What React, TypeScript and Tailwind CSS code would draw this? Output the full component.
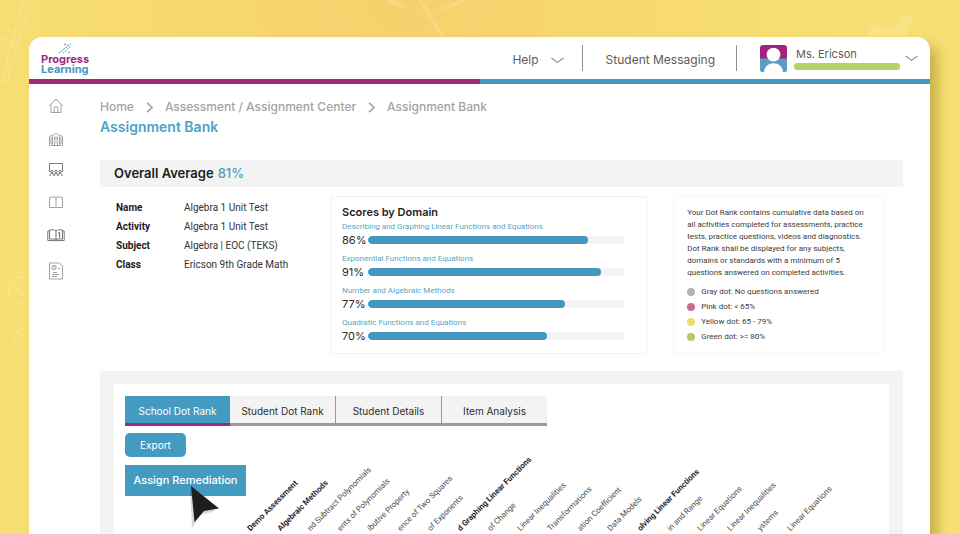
import type { ReactNode } from "react";

const domains = [
  { name: "Describing and Graphing Linear Functions and Equations", score: 86 },
  { name: "Exponential Functions and Equations", score: 91 },
  { name: "Number and Algebraic Methods", score: 77 },
  { name: "Quadratic Functions and Equations", score: 70 },
];

const details = [
  ["Name", "Algebra 1 Unit Test"],
  ["Activity", "Algebra 1 Unit Test"],
  ["Subject", "Algebra | EOC (TEKS)"],
  ["Class", "Ericson 9th Grade Math"],
];

const legend = [
  { color: "bg-[#b3b3b3]", text: "Gray dot: No questions answered" },
  { color: "bg-[#cf6b8e]", text: "Pink dot: < 65%" },
  { color: "bg-[#ecdc6c]", text: "Yellow dot: 65 - 79%" },
  { color: "bg-[#b5cb6c]", text: "Green dot: >= 80%" },
];

const columns = [
  { text: "Demo Assessment", strong: true },
  { text: "Algebraic Methods", strong: true },
  { text: "nd Subtract Polynomials" },
  { text: "ents of Polynomials" },
  { text: "ibutive Property" },
  { text: "ence of Two Squares" },
  { text: "of Exponents" },
  { text: "d Graphing Linear Functions", strong: true },
  { text: "of Change" },
  { text: "Linear Inequalities" },
  { text: "Transformations" },
  { text: "ation Coefficient" },
  { text: "Data Models" },
  { text: "olving Linear Functions", strong: true },
  { text: "in and Range" },
  { text: "Linear Equations" },
  { text: "Linear Inequalities" },
  { text: "ystems" },
  { text: "Linear Equations" },
];

const tabs = ["School Dot Rank", "Student Dot Rank", "Student Details", "Item Analysis"];

function ChevronDown() {
  return (
    <svg width="13" height="7" viewBox="0 0 13 7" fill="none" stroke="#8a8a8a" strokeWidth="1.1" aria-hidden="true">
      <path d="M.5 1 6.5 5.4 12.5 1" />
    </svg>
  );
}

function ChevronRight() {
  return (
    <svg width="7" height="11" viewBox="0 0 7 11" fill="none" stroke="#a3a3a3" strokeWidth="1.6" aria-hidden="true">
      <path d="M1 .8 6 5.500 1 10.200" />
    </svg>
  );
}

function Logo() {
  return (
    <a href="#home" aria-label="Progress Learning" className="flex flex-col text-[11px] leading-[10px] font-bold">
      <svg width="47" height="12" viewBox="0 0 47 12" fill="none" aria-hidden="true">
        <path d="M18 11 31 1M22 11 30 4" stroke="#55b3b0" strokeWidth="1" strokeDasharray="2 .7" />
        <path d="M17 11.4 25 5" stroke="#8fcfd0" strokeWidth=".8" strokeDasharray="1.4 .8" />
        <circle cx="24" cy="2.4" r=".8" fill="#c0559a" />
        <circle cx="28" cy="10.2" r=".8" fill="#c0559a" />
        <circle cx="26.6" cy="3.2" r=".6" fill="#4a9cc4" />
      </svg>
      <span className="text-[#9c2a7f]">Progress</span>
      <span className="text-[#3f98bf]">Learning</span>
    </a>
  );
}

function Avatar() {
  return (
    <svg width="27" height="27" viewBox="0 0 27 27" aria-hidden="true">
      <path d="M0 14V3a3 3 0 0 1 3-3h21a3 3 0 0 1 3 3v11z" fill="#a3217c" />
      <path d="M0 13.5h27V25a2 2 0 0 1-2 2H2a2 2 0 0 1-2-2z" fill="#5b9cc4" />
      <circle cx="13.5" cy="9.6" r="6.9" fill="#fff" />
      <path d="M4 27c.6-5.400 4.600-8.700 9.500-8.700S22.400 21.600 23 27z" fill="#fff" />
    </svg>
  );
}

function NavIcon({ label, children, dark }: { label: string; children: ReactNode; dark?: boolean }) {
  return (
    <a href="#nav" aria-label={label} className={dark ? "text-[#77777b]" : "text-[#a2a2a4]"}>
      <svg width="18" height="18" viewBox="0 0 18 18" fill="none" stroke="currentColor" strokeWidth="1" strokeLinejoin="round" aria-hidden="true">
        {children}
      </svg>
    </a>
  );
}

function Sidebar() {
  return (
    <nav aria-label="Main" className="flex w-[71px] shrink-0 flex-col gap-[15px] pt-[13px] pl-[18px]">
      <NavIcon label="Home">
        <path d="M2 9 9 2l7 7M4 7.500V15.500h10V7.500M7 15.500v-4a2 2 0 0 1 4 0v4" />
      </NavIcon>
      <NavIcon label="School">
        <path d="M5.500 15.500V6L9 3l3.500 3v9.500M5.500 5l-3 1.500v9h13v-9l-3-1.500M7.500 15.500V12h3v3.500M4 7.500v6.500M14 7.500v6.500M7.500 7v3.500M9 6v4.500M10.500 7v3.500" />
      </NavIcon>
      <NavIcon label="Classroom" dark>
        <path d="M4 8.500H2.500V.5h13v8H14" />
        <circle cx="5" cy="8.500" r="1.200" />
        <circle cx="9" cy="8.500" r="1.200" />
        <circle cx="13" cy="8.500" r="1.200" />
        <path d="M3 13v-1.500l2-1.500 2 1.500V13M7 13v-1.500L9 10l2 1.500V13M11 13v-1.500l2-1.500 2 1.500V13" />
      </NavIcon>
      <NavIcon label="Library">
        <path d="M2.500 1.500q4-1.400 6.500 0 2.500-1.400 6.500 0V11.500H10L9 12l-1-.5H2.500zM9 1.500V12" />
      </NavIcon>
      <NavIcon label="Assignments" dark>
        <path d="M2.500 2h-1.700v9.500h7.200l1 .6 1-.6h7.200V2h-1.700M2.500 10V1q4.500-1.300 6.500 1 2-2.300 6.500-1v9H10L9 11l-1-1zM9 2v9" />
        <path d="M11.400 4.200 12.500 3.500V8.500" strokeWidth="1.300" />
      </NavIcon>
      <NavIcon label="Reports">
        <path d="M2.500 1h10l3 3v13h-13zM6 10.500h4M5 12.500h7M5 14.500h5" />
        <circle cx="7" cy="5.500" r="2.200" />
        <path d="M7 3.500v2l1.600 1.300M11 6.500h2" />
      </NavIcon>
    </nav>
  );
}

function Header() {
  return (
    <header>
      <div className="flex h-[42px] items-center justify-between pr-3 pl-3 text-xs text-[#5c5c5e]">
        <Logo />
        <div className="flex items-center">
          <button type="button" className="flex items-center gap-3 pt-1">
            Help
            <ChevronDown />
          </button>
          <span className="mr-[23px] ml-[18px] h-[26px] w-px bg-[#8f8f91]" />
          <a href="#messages" className="pt-1">
            Student Messaging
          </a>
          <span className="mr-[23px] ml-[21px] h-[26px] w-px bg-[#8f8f91]" />
          <button type="button" className="flex items-center gap-[5px] text-left">
            <Avatar />
            <span className="ml-0.5 flex w-[106px] flex-col gap-0.5 text-[11px] leading-[14px]">
              <span className="pl-0.5">Ms. Ericson</span>
              <span className="h-[7px] rounded-[3px] bg-[#b0d564]" />
            </span>
            <ChevronDown />
          </button>
        </div>
      </div>
      <div className="flex h-[5px]">
        <div className="flex-1 bg-[#a3267d]" />
        <div className="flex-1 bg-[#4699be]" />
      </div>
    </header>
  );
}

function ScoresByDomain() {
  return (
    <section className="border border-[#f2f2f2] pt-2 pr-[22px] pb-2 pl-2.5">
      <h2 className="text-[11px] leading-[14px] font-semibold text-[#1f1f1f]">Scores by Domain</h2>
      <ul className="mt-0.5 flex flex-col gap-1.5">
        {domains.map((d) => (
          <li key={d.name}>
            <p className="font-['Roboto',sans-serif] text-[8px] leading-3 text-[#55a7c5]">{d.name}</p>
            <div className="flex h-3.5 items-center">
              <span className="w-[26px] text-[11px] text-[#2a2a2a]">{d.score}%</span>
              <div
                role="meter"
                aria-label={d.name}
                aria-valuenow={d.score}
                aria-valuemin={0}
                aria-valuemax={100}
                className="h-2 flex-1 overflow-hidden rounded-full bg-[#f4f4f4]"
              >
                <div className="h-full rounded-full bg-[#4496bf]" style={{ width: `${d.score}%` }} />
              </div>
            </div>
          </li>
        ))}
      </ul>
    </section>
  );
}

function DotRankInfo() {
  return (
    <section className="border border-[#f7f7f7] py-2.5 pr-3.5 pl-[13px] font-['Roboto',sans-serif] text-[8px] leading-3 text-[#3c3c3e]">
      <p>
        Your Dot Rank contains cumulative data based on all activities completed for assessments, practice tests,
        practice questions, videos and diagnostics. Dot Rank shall be displayed for any subjects, domains or standards
        with a minimum of 5 questions answered on completed activities.
      </p>
      <ul className="mt-[7px] flex flex-col gap-[3px]">
        {legend.map((l) => (
          <li key={l.text} className="flex items-center gap-1.5">
            <span className={`size-2 rounded-full ${l.color}`} />
            {l.text}
          </li>
        ))}
      </ul>
    </section>
  );
}

function DotRankPanel() {
  return (
    <section className="mt-[18px] flex-1 bg-[#f3f3f4] px-3.5 pt-[13px]">
      <div className="h-full bg-white px-[11px] pt-3">
        <div role="tablist" className="flex w-[422px] text-[10px]">
          {tabs.map((t, i) => (
            <button
              key={t}
              type="button"
              role="tab"
              aria-selected={i === 0}
              className={
                i === 0
                  ? "h-[30px] flex-1 border-b-3 border-[#9c2a85] bg-[#449bc1] pt-1 text-white"
                  : i === 1
                    ? "h-[30px] flex-1 border-b-3 border-[#999] bg-[#f3f3f4] pt-1 text-[#2e2e2e]"
                    : "h-[30px] flex-1 border-b-3 border-l border-[#999] bg-[#f3f3f4] pt-1 text-[#2e2e2e]"
              }
            >
              {t}
            </button>
          ))}
        </div>
        <div className="relative mt-[7px] flex flex-col items-start gap-2">
          <button type="button" className="h-6 w-[61px] rounded-[5px] bg-[#449bc1] text-[10px] text-white">
            Export
          </button>
          <button type="button" className="h-[31px] w-[121px] bg-[#449bc1] text-[11px] font-medium text-white">
            Assign Remediation
          </button>
          <svg className="absolute top-[52px] left-[64px]" width="34" height="44" viewBox="0 0 34 44" aria-hidden="true">
            <path d="M1 4 3 43 12 30 26 26z" fill="#000" opacity=".15" />
            <path d="M2 1 5.500 37 15 26 30 23.500z" fill="#1e1e1f" />
          </svg>
        </div>
        <table className="mt-7 ml-[124px] table-fixed border-collapse">
          <thead>
            <tr>
              {columns.map((c, i) => (
                <th
                  key={i}
                  scope="col"
                  className={
                    c.strong
                      ? "p-0 text-left font-['Roboto',sans-serif] text-[8px] leading-3 font-bold text-[#2a2a2a]"
                      : "p-0 text-left font-['Roboto',sans-serif] text-[8px] leading-3 font-normal text-[#4a4a4a]"
                  }
                >
                  <div className="w-[30px]">
                    <div className="w-max max-w-[30px] origin-left -rotate-45 whitespace-nowrap">{c.text}</div>
                  </div>
                </th>
              ))}
            </tr>
          </thead>
        </table>
      </div>
    </section>
  );
}

function Doodles() {
  return (
    <svg
      className="absolute inset-0 size-full"
      viewBox="0 0 960 534"
      preserveAspectRatio="none"
      fill="none"
      stroke="#fff"
      strokeOpacity=".14"
      strokeWidth="2"
      aria-hidden="true"
    >
      <path d="M22 4 2 82l4 2L28 8zM0 38l24 8M6 30l18 8M22 4l6-2 1 5" />
      <path d="M27 278c-14-4-22 8-16 18 4 7 12 8 17 6M14 288l10 8M28 328c-14 0-18 14-10 22l10 6" />
      <path d="m868 36 4-12 14 4 12-2 6-12 10 4-8 18z" fill="#fff" fillOpacity=".15" stroke="none" />
      <path d="M388 0l18 7M420 0l22 36M440 10l26-10" strokeWidth="4" />
    </svg>
  );
}

export default function App() {
  return (
    <div className="relative h-screen overflow-hidden bg-[#f7df73] bg-[radial-gradient(ellipse_at_42%_0%,#f6d16d_0%,#f7df73_55%)] pt-[37px] pr-[30px] pl-[29px] font-['Inter',sans-serif]">
      <Doodles />
      <div className="relative flex h-full flex-col overflow-hidden rounded-t-[13px] bg-white shadow-[8px_8px_12px_rgba(120,95,0,0.35)]">
        <Header />
        <div className="flex min-h-0 flex-1">
          <Sidebar />
          <main className="flex min-w-0 flex-1 flex-col pt-[15px] pr-[27px]">
            <nav aria-label="Breadcrumb" className="flex items-center gap-3 text-xs leading-4 font-medium text-[#a3a3a3]">
              <a href="#home">Home</a>
              <ChevronRight />
              <a href="#center">Assessment / Assignment Center</a>
              <ChevronRight />
              <a href="#bank">Assignment Bank</a>
            </nav>
            <h1 className="mt-1 text-sm leading-4 font-semibold text-[#4ba2c5]">Assignment Bank</h1>
            <div className="mt-[25px] flex h-[27px] shrink-0 items-center gap-1 bg-[#f3f3f4] px-3.5 text-[13px] font-semibold text-[#1c1c1c]">
              Overall Average <span className="font-medium text-[#4ba2c5]">81%</span>
            </div>
            <div className="mt-[9px] flex h-[157px] shrink-0 pr-[19px] pl-4">
              <dl className="flex w-[215px] shrink-0 flex-col pt-0.5 font-['Roboto',sans-serif] text-[10px] leading-[19px] text-[#333]">
                {details.map(([k, v]) => (
                  <div key={k} className="flex">
                    <dt className="w-[68px] font-bold text-[#1c1c1c]">{k}</dt>
                    <dd>{v}</dd>
                  </div>
                ))}
              </dl>
              <div className="grid min-w-0 flex-1 grid-cols-[3fr_2fr] gap-[26px]">
                <ScoresByDomain />
                <DotRankInfo />
              </div>
            </div>
            <DotRankPanel />
          </main>
        </div>
      </div>
    </div>
  );
}
